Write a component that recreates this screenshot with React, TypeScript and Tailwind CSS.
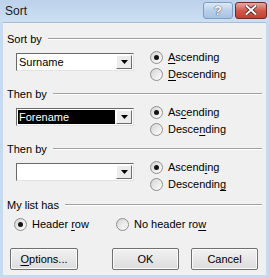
import type { ReactNode } from "react";

const Radio = ({ checked }: { checked?: boolean }) => (
  <span className="relative w-[13px] h-[13px] rounded-full border border-[#8f8f8f] bg-gradient-to-br from-[#d4d4d4] to-white flex items-center justify-center shrink-0">
    {checked && <span className="w-[5px] h-[5px] rounded-full bg-[#151515]" />}
  </span>
);

const U = ({ children }: { children: ReactNode }) => <span className="underline underline-offset-[2px]">{children}</span>;

const Option = ({ checked, children }: { checked?: boolean; children: ReactNode }) => (
  <div className="flex items-center gap-[5px] h-[17px]">
    <Radio checked={checked} />
    <span>{children}</span>
  </div>
);

const Group = ({ label }: { label: string }) => (
  <div className="flex items-center h-[16px] pl-[4px] pr-[4px]">
    <span>{label}</span>
    <div className="ml-[6px] flex-1 h-[2px] border-t border-[#a0a0a0] border-b border-b-white" />
  </div>
);

const Combo = ({ value, selected }: { value: string; selected?: boolean }) => (
  <div className="w-[118px] h-[18px] border border-t-[#696969] border-l-[#696969] border-r-[#e3e3e3] border-b-[#e3e3e3] bg-white flex">
    <div className="flex-1 flex items-center p-[1px]">
      <span className={`h-full w-full flex items-center pl-[1px] ${selected ? "bg-black text-white" : ""}`}>{value}</span>
    </div>
    <div className="w-[16px] my-[1px] mr-[1px] bg-[#ececec] border border-t-white border-l-white border-r-[#6d6d6d] border-b-[#6d6d6d] flex items-center justify-center">
      <svg width="7" height="4" viewBox="0 0 7 4"><path d="M0 0h7L3.5 4z" fill="#000" /></svg>
    </div>
  </div>
);

const SortBlock = ({ label, value, selected, asc, desc }: { label: string; value: string; selected?: boolean; asc: ReactNode; desc: ReactNode }) => (
  <div className="flex flex-col">
    <Group label={label} />
    <div className="flex">
      <div className="pl-[13px] pt-[6px] w-[147px]">
        <Combo value={value} selected={selected} />
      </div>
      <div className="flex flex-col pt-[2px]">
        <Option checked>{asc}</Option>
        <Option>{desc}</Option>
      </div>
    </div>
  </div>
);

const Btn = ({ children, w }: { children: ReactNode; w: string }) => (
  <div className={`${w} h-[22px] border border-[#707070] rounded-[2px] bg-gradient-to-b from-[#f2f2f2] to-[#dcdcdc] shadow-[inset_0_0_0_1px_#fbfbfb] flex items-center justify-center`}>
    {children}
  </div>
);

export default function App() {
  return (
    <div className="w-[269px] h-[278px] bg-[#c6daf0] flex flex-col font-['Liberation_Sans',sans-serif] text-[11px] text-black leading-none overflow-hidden">
      {/* title bar */}
      <div className="h-[22px] flex items-center justify-between pl-[5px] pr-[2px] bg-gradient-to-b from-[#bcd2eb] to-[#cddff2]">
        <span className="text-[12px] text-[#1b1b1b]">Sort</span>
        <div className="flex gap-[2px] mt-[-2px]">
          <div className="w-[30px] h-[17px] rounded-[3px] border border-[#7f9cc3] bg-gradient-to-b from-[#dde9f6] via-[#b9d0ea] to-[#a7c2e3] flex items-center justify-center">
            <span className="text-white font-bold text-[13px] [text-shadow:0_0_1px_#2c3e5a,0_0_1px_#2c3e5a]">?</span>
          </div>
          <div className="w-[32px] h-[17px] rounded-[3px] border border-[#6e2a25] bg-gradient-to-b from-[#e6a79d] via-[#d0594d] to-[#c3402f] flex items-center justify-center">
            <svg width="12" height="10" viewBox="0 0 12 10">
              <path d="M1.5 1l9 8M10.5 1l-9 8" stroke="#3d1c18" strokeWidth="3.4" strokeLinecap="square" />
              <path d="M1.5 1l9 8M10.5 1l-9 8" stroke="#fff" strokeWidth="2" strokeLinecap="square" />
            </svg>
          </div>
        </div>
      </div>

      {/* client area */}
      <div className="flex-1 mx-[3px] mb-[3px] bg-[#f0f0f0] border-t border-[#a9bcd3] flex flex-col pt-[8px]">
        <SortBlock label="Sort by" value="Surname" asc={<><U>A</U>scending</>} desc={<><U>D</U>escending</>} />
        <div className="h-[3px]" />
        <SortBlock label="Then by" value="Forename" selected asc={<>As<U>c</U>ending</>} desc={<>Desce<U>n</U>ding</>} />
        <div className="h-[3px]" />
        <SortBlock label="Then by" value="" asc={<>Ascend<U>i</U>ng</>} desc={<>Descendin<U>g</U></>} />

        <div className="mt-[4px]">
          <Group label="My list has" />
        </div>
        <div className="flex pl-[11px] mt-[3px]">
          <div className="w-[102px]">
            <Option checked>Header <U>r</U>ow</Option>
          </div>
          <Option>No header ro<U>w</U></Option>
        </div>

        <div className="flex items-center mt-[15px] pl-[7px]">
          <Btn w="w-[68px]"><U>O</U>ptions...</Btn>
          <div className="ml-[34px] flex gap-[12px]">
            <Btn w="w-[67px]">OK</Btn>
            <Btn w="w-[67px]">Cancel</Btn>
          </div>
        </div>
      </div>
    </div>
  );
}
